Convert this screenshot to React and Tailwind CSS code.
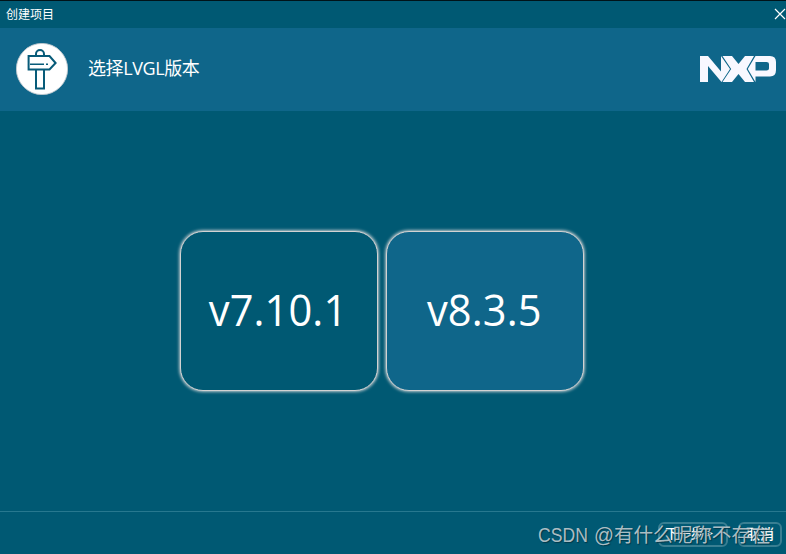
import React from 'react';

const UI_FONT = "font-['Open_Sans','Noto_Sans_CJK_SC',sans-serif]";

function SignpostIcon() {
  return (
    <svg viewBox="0 0 52 52" className="h-[52px] w-[52px] shrink-0">
      <circle cx="26" cy="26" r="25.6" fill="#fff" stroke="#c3cbd0" strokeWidth="0.9" />
      <g fill="none" stroke="#075b79" strokeWidth="2">
        <path d="M20 12.5V11a4 4 0 0 1 8 0v1.5" />
        <path d="M12.6 13H33.5L39.6 20L33.5 26.5H12.6Z" />
        <path d="M20 27V45.5H28V27" />
        <path d="M14 21.3H28M30 21.3H32" strokeWidth="1.4" />
      </g>
    </svg>
  );
}

function NxpLogo() {
  return (
    <svg viewBox="0 0 76 26" className="h-[26px] w-[76px]" fill="#f8f8ff">
      <path d="M0 0H8L21 15.5V0L30 13L21.5 26L8 10V26H0Z" />
      <path d="M22.5 0H32L38.5 8L45 0H54L46.5 13L54 26H45L38.5 18L32 26H22.5L31.2 13Z" />
      <path fillRule="evenodd" d="M55.5 0H70Q76 0 76 6V14Q76 20.5 70 20.5H55.5V26L47.8 13ZM55.5 6V14.5H66.5Q69 14.5 69 12.5V8Q69 6 66.5 6Z" />
    </svg>
  );
}

function VersionCard({ label, selected }) {
  return (
    <button
      className={`flex h-[160px] w-[198px] items-center justify-center rounded-[23px] border border-[#d2d2d2] pr-0.5 pb-[3px] text-[44.5px] leading-none text-white shadow-[0_0_3px_1px_#b5c4c9] ${
        selected ? 'bg-[#0f668a]' : 'bg-[#005973]'
      }`}
    >
      <span className="inline-block scale-x-[0.935] tracking-[0.1px]">{label}</span>
    </button>
  );
}

export default function App() {
  return (
    <div className={`relative flex h-[554px] w-[786px] flex-col overflow-hidden bg-[#005973] text-white ${UI_FONT}`}>
      <header className="flex h-7 shrink-0 items-center justify-between border-t border-[#001319] pb-px pl-1.5">
        <span className="pt-px text-xs leading-none">创建项目</span>
        <svg viewBox="0 0 12 12" className="h-3 w-3" fill="none" stroke="#fff" strokeWidth="1.2">
          <path d="M1 1L11 11M11 1L1 11" />
        </svg>
      </header>
      <section className="flex h-[83px] shrink-0 items-center bg-[#0f668a] pr-2.5 pb-px pl-4">
        <SignpostIcon />
        <h1 className="ml-5 flex-1 pb-[3px] text-[18px] leading-none tracking-[-0.4px]">选择LVGL版本</h1>
        <NxpLogo />
      </section>
      <main className="flex flex-1 gap-2 pt-[120px] pl-[180px]">
        <VersionCard label="v7.10.1" />
        <VersionCard label="v8.3.5" selected />
      </main>
      <footer className="flex h-[43px] shrink-0 items-start justify-end gap-2.5 border-t border-[#27788f] pt-2.5 pr-1">
        <button className="h-[25px] w-[70px] rounded-md border-2 border-[#397f92] pr-2 pb-0.5 text-[13px] leading-none font-medium tracking-[-0.5px] whitespace-nowrap">
          下一步 &gt;
        </button>
        <button className="h-[25px] w-[44px] rounded-md border-2 border-[#397f92] pb-0.5 text-[14px] leading-none font-medium whitespace-nowrap">
          取消
        </button>
      </footer>
      <div className="pointer-events-none absolute top-[525px] left-[538px] flex items-center font-['Liberation_Sans','Noto_Sans_CJK_SC',sans-serif] text-[19.8px] leading-[20px] whitespace-nowrap text-[#c3cdd1]/90 [text-shadow:1px_1px_1px_#00384a]">
        <span className="w-[56px]"><span className="inline-block origin-left scale-x-[0.89]">CSDN</span></span>
        <span className="inline-block origin-left scale-x-[0.99]">@有什么昵称不存在</span>
      </div>
    </div>
  );
}
